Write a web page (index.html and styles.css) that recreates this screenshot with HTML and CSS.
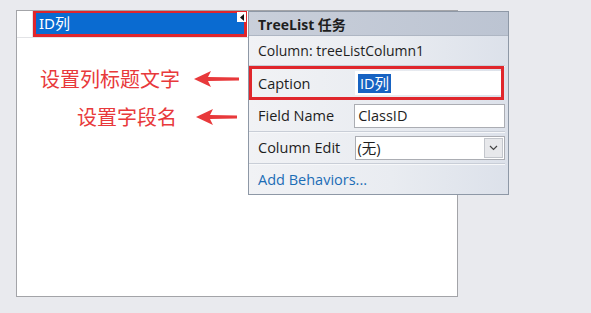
FILE: index.html
```html
<!DOCTYPE html>
<html lang="zh-CN">
<head>
    <meta charset="UTF-8">
    <title>TreeList 任务</title>
    <link rel="stylesheet" href="styles.css">
</head>
<body>
    <div class="stage">
        <div class="grid">
            <div class="grid-header">
                <div class="indicator"></div>
                <div class="col-header">
                    <span class="col-caption">ID列</span>
                </div>
            </div>
            <div class="grid-body"></div>
        </div>

        <div class="smart-tag">
            <svg width="8" height="9" viewBox="0 0 8 9"><path d="M6 1 L2 4.5 L6 8 Z" fill="#111"/></svg>
        </div>

        <div class="note note-caption">
            <span>设置列标题文字</span>
            <svg width="45" height="18" viewBox="0 0 45 18"><path d="M0 9 L17 1 L14 7 L45 7.5 L45 10.5 L14 11 L17 17 Z" fill="#e8393b"/></svg>
        </div>
        <div class="note note-field">
            <span>设置字段名</span>
            <svg width="41" height="18" viewBox="0 0 41 18"><path d="M0 9 L17 1 L14 7 L41 7.5 L41 10.5 L14 11 L17 17 Z" fill="#e8393b"/></svg>
        </div>

        <div class="tasks">
            <div class="tasks-title">TreeList 任务</div>
            <div class="task-row task-info">Column: treeListColumn1</div>
            <div class="task-row task-caption">
                <label>Caption</label>
                <div class="field"><span class="selected">ID列</span></div>
            </div>
            <div class="task-row">
                <label>Field Name</label>
                <div class="field field-wide">ClassID</div>
            </div>
            <div class="task-row">
                <label>Column Edit</label>
                <div class="field combo">
                    <span>(无)</span>
                    <div class="drop">
                        <svg width="9" height="6" viewBox="0 0 9 6"><path d="M1 1 L4.5 4.5 L8 1" fill="none" stroke="#444" stroke-width="1.2"/></svg>
                    </div>
                </div>
            </div>
            <div class="task-link">Add Behaviors...</div>
        </div>
    </div>
</body>
</html>
```

FILE: styles.css
```css
:root {
    --page: #e9eaee;
    --grid-border: #a3a4a8;
    --select: #0a6bd1;
    --mark: #e0262c;
    --note: #e8393b;
    --text: #1e1e1e;
    --link: #1c6db6;
}

* {
    margin: 0;
    padding: 0;
    box-sizing: border-box;
}

body {
    background: var(--page);
    font-family: "Open Sans", "Noto Sans CJK SC", sans-serif;
    color: var(--text);
}

.stage {
    position: relative;
    width: 591px;
    height: 313px;
    padding: 10px 0 0 16px;
}

.grid {
    width: 442px;
    height: 287px;
    background: #fff;
    border: 1px solid var(--grid-border);
    display: flex;
    flex-direction: column;
}

.grid-header {
    display: flex;
    height: 27px;
    border-bottom: 1px solid #e2e3e6;
}

.indicator {
    width: 16px;
    border-right: 1px solid #e2e3e6;
}

.col-header {
    width: 214px;
    border: 3px solid var(--mark);
    border-top-width: 2px;
    background: var(--select);
    padding-left: 3px;
    display: flex;
    align-items: center;
}

.col-caption {
    color: #fff;
    font-size: 15px;
    font-family: "Noto Sans", "Noto Sans CJK SC", sans-serif;
    line-height: 1;
}

.smart-tag {
    position: absolute;
    left: 237px;
    top: 12px;
    width: 9px;
    height: 10px;
    background: #fff;
    display: flex;
    align-items: center;
    justify-content: center;
}

.note {
    position: absolute;
    display: flex;
    align-items: center;
    gap: 14px;
    color: var(--note);
    font-family: "Noto Sans CJK SC", sans-serif;
    font-size: 20px;
    line-height: 1;
}

.note-caption {
    left: 40px;
    top: 69px;
}

.note-field {
    left: 77px;
    top: 107px;
    gap: 19px;
}

.tasks {
    position: absolute;
    left: 248px;
    top: 11px;
    width: 261px;
    height: 184px;
    border: 1px solid #8e98a6;
    background: linear-gradient(to right, #f1f2f5 0%, #e9ecf1 55%, #dce1ea 100%);
    font-size: 14.5px;
}

.tasks-title {
    height: 24px;
    padding-left: 9px;
    background: linear-gradient(to right, #c9cfda, #bcc4d2);
    border-bottom: 1px solid #aeb6c3;
    font-weight: bold;
    font-size: 14px;
    display: flex;
    align-items: center;
}

.task-row {
    display: flex;
    align-items: center;
    height: 32px;
    margin: 0 3px 0 0;
    padding-left: 9px;
    border-bottom: 1px solid #c9ced7;
    box-shadow: 0 1px 0 #f7f8fa;
}

.task-info {
    height: 30px;
    font-size: 14px;
}

.task-row label {
    width: 97px;
}

.task-caption {
    height: 34px;
    margin-left: 0;
    margin-right: 4px;
    border: 3px solid var(--mark);
    padding-left: 6px;
    box-shadow: none;
}

.field {
    height: 24px;
    width: 145px;
    background: #fff;
    border: 1px solid #abadb3;
    display: flex;
    align-items: center;
    padding-left: 2px;
    font-family: "Open Sans", "Noto Sans CJK SC", sans-serif;
}

.task-caption .field {
    border-color: #fff;
    width: 146px;
}

.field-wide {
    width: 152px;
    padding-left: 3px;
}

.selected {
    background: #1763c2;
    color: #fff;
    padding: 0 2px;
    line-height: 19px;
}

.combo {
    width: 151px;
    justify-content: space-between;
    padding-left: 2px;
    padding-right: 1px;
}

.drop {
    width: 19px;
    height: 20px;
    border: 1px solid #c3c6cc;
    background: #e7e8eb;
    display: flex;
    align-items: center;
    justify-content: center;
}

.task-link {
    height: 30px;
    padding-left: 9px;
    display: flex;
    align-items: center;
    color: var(--link);
}
```
